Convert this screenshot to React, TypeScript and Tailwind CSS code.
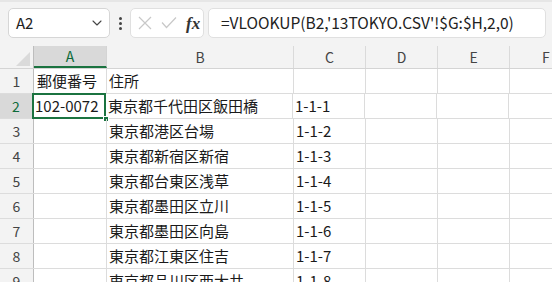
import { ChevronDown } from 'lucide-react';

const font = { fontFamily: '"Noto Sans CJK JP", "Noto Sans", sans-serif' };

const rows = [
  { n: 1, a: '郵便番号', b: '住所', c: '' },
  { n: 2, a: '102-0072', b: '東京都千代田区飯田橋', c: '1-1-1' },
  { n: 3, a: '', b: '東京都港区台場', c: '1-1-2' },
  { n: 4, a: '', b: '東京都新宿区新宿', c: '1-1-3' },
  { n: 5, a: '', b: '東京都台東区浅草', c: '1-1-4' },
  { n: 6, a: '', b: '東京都墨田区立川', c: '1-1-5' },
  { n: 7, a: '', b: '東京都墨田区向島', c: '1-1-6' },
  { n: 8, a: '', b: '東京都江東区住吉', c: '1-1-7' },
  { n: 9, a: '', b: '東京都品川区西大井', c: '1-1-8' },
];

const cols = [
  { key: 'A', w: 'w-[73px]' },
  { key: 'B', w: 'w-[187px]' },
  { key: 'C', w: 'w-[72px]' },
  { key: 'D', w: 'w-[72px]' },
  { key: 'E', w: 'w-[72px]' },
];

const App = () => {
  return (
    <div
      className="w-[552px] h-[282px] overflow-hidden bg-[#f3f3f3] text-[#1a1a1a] border-t-2 border-[#e6e6e6]"
      style={font}
    >
      {/* formula bar */}
      <div className="flex items-center h-[44px] pt-[6px] pb-[8px] pl-[8px]">
        <div className="flex items-center justify-between w-[102px] h-[30px] bg-white border border-[#d6d6d6] rounded-[5px] pl-[7px] pr-[4px]">
          <span className="text-[15px] text-[#222]">A2</span>
          <ChevronDown size={16} strokeWidth={1.6} className="text-[#444]" />
        </div>
        <div className="flex flex-col items-center justify-center gap-[2px] w-[20px]">
          <span className="w-[3px] h-[3px] rounded-full bg-[#444]" />
          <span className="w-[3px] h-[3px] rounded-full bg-[#444]" />
          <span className="w-[3px] h-[3px] rounded-full bg-[#444]" />
        </div>
        <div className="flex items-center w-[74px] h-[30px] bg-white border border-[#e0e0e0] rounded-[5px] pl-[6px]">
          <svg width="14" height="14" viewBox="0 0 14 14" className="ml-[1px]">
            <path d="M1 1L13 13M13 1L1 13" stroke="#c8c8c8" strokeWidth="1.2" fill="none" />
          </svg>
          <svg width="16" height="14" viewBox="0 0 16 14" className="ml-[9px]">
            <path d="M1 6.5L5.5 11.5L15 1.5" stroke="#c8c8c8" strokeWidth="1.2" fill="none" />
          </svg>
          <span
            className="ml-[9px] text-[17px] italic font-bold text-[#333] leading-none"
            style={{ fontFamily: '"Liberation Serif", serif' }}
          >
            fx
          </span>
        </div>
        <div className="flex items-center w-[338px] h-[30px] ml-[4px] bg-white border border-[#e0e0e0] rounded-[5px] pl-[12px]">
          <span className="text-[15.5px] text-[#222] whitespace-nowrap">
            =VLOOKUP(B2,'13TOKYO.CSV'!$G:$H,2,0)
          </span>
        </div>
      </div>

      {/* column headers */}
      <div className="flex h-[23px] bg-[#f3f3f3] border-b border-[#d4d4d4]">
        <div className="w-[34px] h-full border-r border-[#bdbdbd] flex items-end justify-end pr-[3px] pb-[2px]">
          <svg width="14" height="14" viewBox="0 0 14 14">
            <path d="M14 0L14 14L0 14Z" fill="#dadada" />
          </svg>
        </div>
        {cols.map((c) => (
          <div
            key={c.key}
            className={`${c.w} h-full flex items-center justify-center text-[14px] border-r ${
              c.key === 'A'
                ? 'bg-[#d9d9d9] text-[#0e6b3a] border-[#d4d4d4] border-b-2 border-b-[#1b7340] -mb-px'
                : 'text-[#444] border-[#dadada]'
            }`}
          >
            {c.key}
          </div>
        ))}
        <div className="flex-1 h-full flex items-center pl-[32px] text-[14px] text-[#444]">F</div>
      </div>

      {/* rows */}
      {rows.map((r) => (
        <div key={r.n} className="flex h-[25px] bg-white border-b border-[#dcdcdc]">
          <div
            className={`w-[34px] h-full flex items-center justify-center text-[14px] border-r ${
              r.n === 2
                ? 'bg-[#d9d9d9] text-[#0e6b3a] border-r-2 border-[#1b7340] -mr-px'
                : 'bg-[#f3f3f3] text-[#444] border-[#bdbdbd]'
            }`}
          >
            {r.n}
          </div>
          <div
            className={`relative w-[73px] h-full flex items-center pt-[1px] text-[15px] whitespace-nowrap border-r border-[#dcdcdc] ${
              r.n === 2 ? 'pl-[2px]' : 'pl-[3px]'
            }`}
          >
            {r.n === 2 && (
              <>
                <div className="absolute -left-px -top-px -right-px -bottom-px border-2 border-[#1b7340]" />
                <div className="absolute -right-[4px] -bottom-[4px] w-[6px] h-[6px] bg-[#1b7340] border border-white" />
              </>
            )}
            {r.a}
          </div>
          <div className="w-[187px] h-full flex items-center pl-[2px] pt-[1px] text-[15px] whitespace-nowrap border-r border-[#dcdcdc]">
            {r.b}
          </div>
          <div className="w-[72px] h-full flex items-center pl-[2px] pt-[1px] text-[15px] whitespace-nowrap border-r border-[#dcdcdc]">
            {r.c}
          </div>
          <div className="w-[72px] h-full border-r border-[#dcdcdc]" />
          <div className="w-[72px] h-full border-r border-[#dcdcdc]" />
          <div className="flex-1 h-full" />
        </div>
      ))}
    </div>
  );
};

export default App;
